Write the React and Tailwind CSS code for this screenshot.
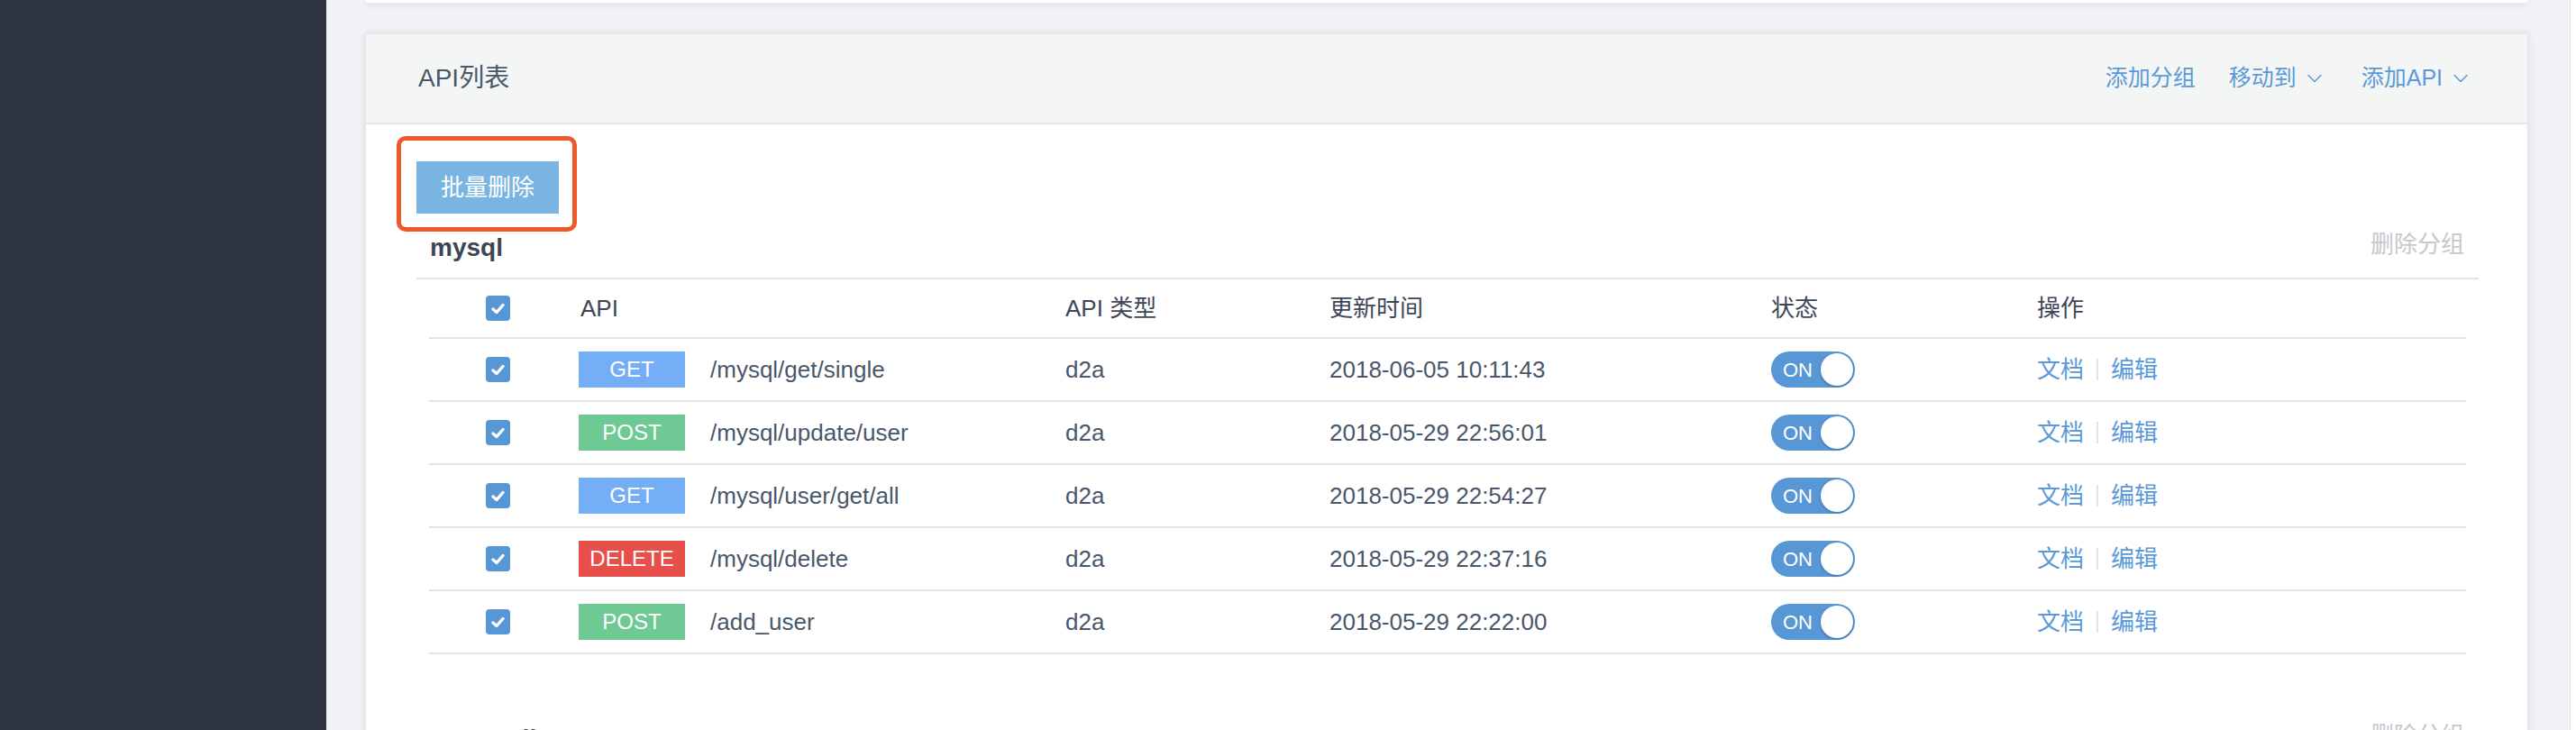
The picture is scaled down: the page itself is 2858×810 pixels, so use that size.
import { ChevronDown } from 'lucide-react'

const rows = [
  { method: 'GET', path: '/mysql/get/single', type: 'd2a', time: '2018-06-05 10:11:43' },
  { method: 'POST', path: '/mysql/update/user', type: 'd2a', time: '2018-05-29 22:56:01' },
  { method: 'GET', path: '/mysql/user/get/all', type: 'd2a', time: '2018-05-29 22:54:27' },
  { method: 'DELETE', path: '/mysql/delete', type: 'd2a', time: '2018-05-29 22:37:16' },
  { method: 'POST', path: '/add_user', type: 'd2a', time: '2018-05-29 22:22:00' },
]

const methodBg = {
  GET: 'bg-[#74aef7]',
  POST: 'bg-[#6fc994]',
  DELETE: 'bg-[#e74f4a]',
}

const cols = 'grid grid-cols-[166px_540px_293px_490px_295px_1fr] items-center'

function Check() {
  return (
    <span className="flex h-[28px] w-[27px] items-center justify-center rounded-[4px] bg-[#5897d6]">
      <svg width="17" height="15" viewBox="0 0 17 15">
        <path d="M3 8 L7 11.5 L14 3.5" fill="none" stroke="white" strokeWidth="3.4" strokeLinecap="round" strokeLinejoin="round" />
      </svg>
    </span>
  )
}

function Toggle() {
  return (
    <span className="flex h-[40px] w-[93px] items-center justify-between rounded-full bg-[#5897d6] pl-[13px] pr-[2px] text-[22px] text-white">
      ON
      <span className="h-[36px] w-[36px] rounded-full bg-white shadow-[0_1px_3px_rgba(0,0,0,0.3)]" />
    </span>
  )
}

function Group({ name, items }) {
  return (
    <div className="mb-[72px]">
      <div className="flex h-[36px] items-center justify-between pl-[15px] pr-[16px]">
        <span className="mt-[8px] text-[28px] font-bold text-[#3d4657]">{name}</span>
        <span className="text-[26px] text-[#c5c8ce]">删除分组</span>
      </div>
      <div className="mt-[19px] border-t-2 border-[#dfe3ea]">
        <div className="px-[14px]">
          <div className={`${cols} h-[66px] border-b-2 border-[#dfe3ea] text-[26px] text-[#3d4657]`}>
            <div className="pl-[63px]"><Check /></div>
            <div className="pl-[2px]">API</div>
            <div>API 类型</div>
            <div>更新时间</div>
            <div>状态</div>
            <div>操作</div>
          </div>
          {items.map((r, i) => (
            <div key={i} className={`${cols} h-[70px] border-b-2 border-[#dfe3ea] text-[26px] text-[#48576a]`}>
              <div className="pl-[63px]"><Check /></div>
              <div className="flex items-center gap-[28px]">
                <span className={`flex h-[40px] w-[118px] items-center justify-center text-[24px] text-white ${methodBg[r.method]}`}>
                  {r.method}
                </span>
                <span>{r.path}</span>
              </div>
              <div>{r.type}</div>
              <div>{r.time}</div>
              <div><Toggle /></div>
              <div className="flex items-center text-[#5a9ad9]">
                <span>文档</span>
                <span className="mx-[14px] h-[24px] w-[2px] bg-[#dfe3ea]" />
                <span>编辑</span>
              </div>
            </div>
          ))}
        </div>
      </div>
    </div>
  )
}

export default function App() {
  return (
    <div
      className="flex h-[810px] w-[2858px] overflow-hidden bg-[#f0f2f5]"
      style={{ fontFamily: '"Liberation Sans", "Noto Sans CJK SC", sans-serif' }}
    >
      <aside className="w-[362px] shrink-0 bg-[#2d3340]" />

      <main className="flex-1 pl-[43px] pr-[46px]">
        <div className="h-[3px] w-[2400px] rounded-b-[3px] bg-white shadow-[0_2px_6px_rgba(0,0,0,0.12)]" />

        <div className="mt-[34px] w-[2400px] rounded-[3px] border border-[#e3e6ea] bg-white shadow-[0_0_8px_rgba(0,0,0,0.1)]">
          <div className="flex h-[100px] items-center justify-between border-b-2 border-[#e3e7ea] bg-[#f4f6f6] pl-[58px] pr-[60px]">
            <span className="text-[28px] text-[#48576a]">API列表</span>
            <div className="flex items-center text-[25px] text-[#5a9ad9]">
              <span>添加分组</span>
              <span className="ml-[37px] flex items-center gap-[6px]">
                移动到 <ChevronDown size={28} strokeWidth={1.3} />
              </span>
              <span className="ml-[38px] flex items-center gap-[6px]">
                添加API <ChevronDown size={28} strokeWidth={1.3} />
              </span>
            </div>
          </div>

          <div className="pl-[56px] pr-[54px] pt-[41px]">
            <div className="relative w-fit">
              <button className="h-[58px] w-[158px] bg-[#7ab4e2] text-[26px] text-white">批量删除</button>
              <span className="pointer-events-none absolute -bottom-[20px] -left-[22px] -right-[20px] -top-[28px] rounded-[10px] border-[5px] border-[#f0582a]" />
            </div>

            <div className="mt-[16px]">
              <Group name="mysql" items={rows} />
              <Group name="mongodb" items={rows} />
            </div>
          </div>
        </div>
      </main>

      <div className="w-[7px] shrink-0 border-l border-[#e2e4e8] bg-white" />
    </div>
  )
}
